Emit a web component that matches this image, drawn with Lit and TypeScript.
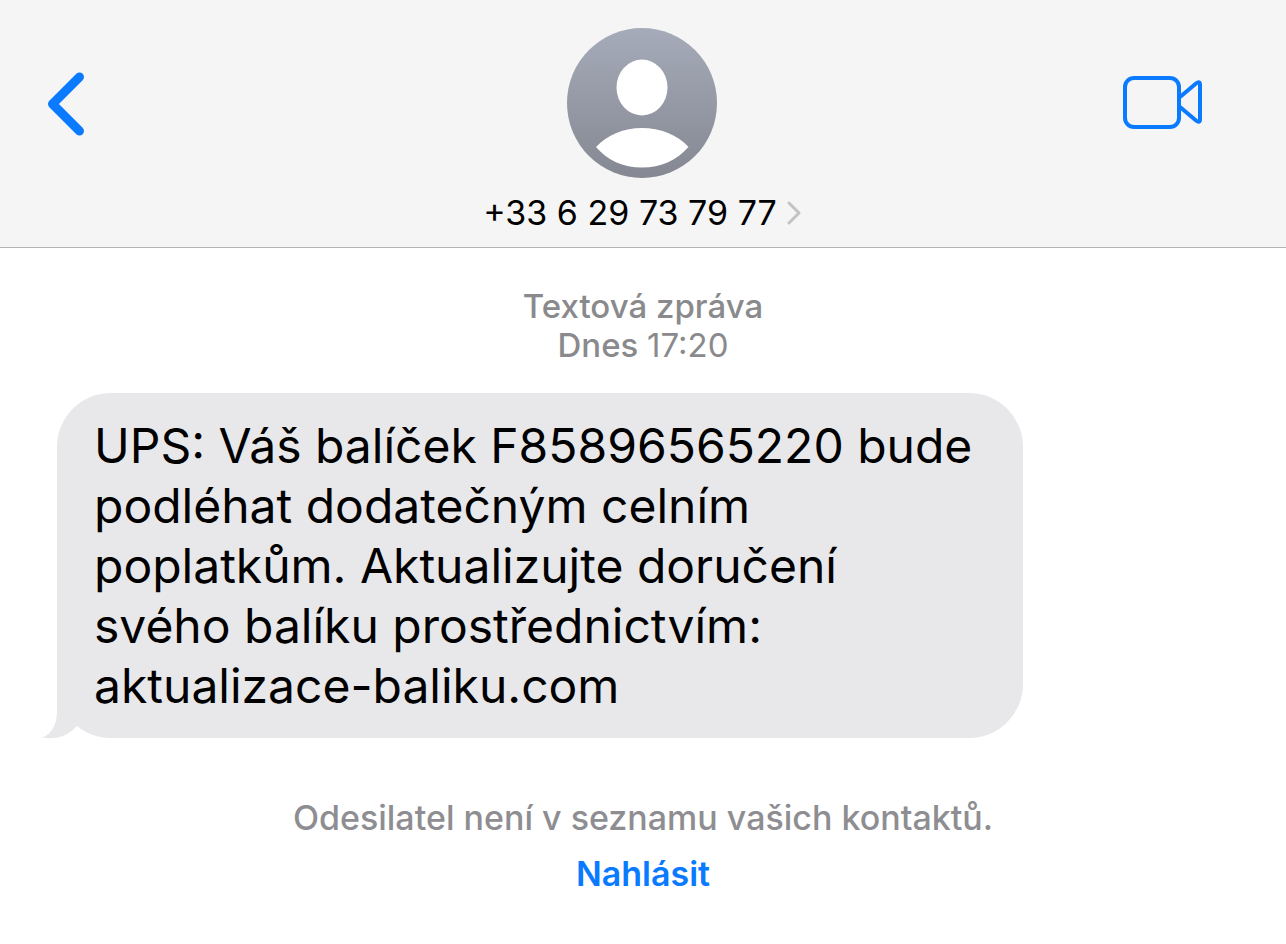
import { LitElement, html, css } from "lit";
import { customElement, property } from "lit/decorators.js";

@customElement("chat-header")
class ChatHeader extends LitElement {
  @property() phone = "";

  static styles = css`
    :host {
      display: block;
      background: #f5f5f5;
      border-bottom: 1px solid #b4b4b6;
    }
    .bar {
      display: grid;
      grid-template-columns: 1fr auto 1fr;
      align-items: start;
      padding: 28px 80px 14px 44px;
    }
    button {
      display: block;
      padding: 0;
      border: 0;
      background: none;
      color: inherit;
      font: inherit;
      cursor: pointer;
    }
    svg {
      display: block;
    }
    .back,
    .video {
      margin-top: 42px;
    }
    .video {
      justify-self: end;
    }
    .contact {
      display: flex;
      flex-direction: column;
      align-items: center;
      gap: 15px;
      margin-left: 34px;
    }
    .number {
      display: flex;
      align-items: center;
      gap: 10px;
      font-size: 34px;
      line-height: 40px;
      color: #000;
    }
  `;

  render() {
    return html`
      <header class="bar">
        <button class="back" aria-label="Zpět">
          <svg width="44" height="68" viewBox="0 0 44 68" fill="none" stroke="#0a7aff" stroke-width="9" stroke-linecap="round" stroke-linejoin="round">
            <path d="M35.500 7 8.500 34 35.500 61" />
          </svg>
        </button>
        <button class="contact">
          <svg width="150" height="150" viewBox="0 0 150 150" aria-hidden="true">
            <defs>
              <linearGradient id="shade" x1="0" y1="0" x2="0" y2="1">
                <stop offset="0" stop-color="#a5abb9" />
                <stop offset="1" stop-color="#858892" />
              </linearGradient>
            </defs>
            <circle cx="75" cy="75" r="75" fill="url(#shade)" />
            <ellipse cx="75" cy="59.500" rx="25.500" ry="28" fill="#fff" />
            <path d="M29 119C40 107 57 100 75 100s36 7 46.500 19C110 132 94 139.500 75 139.500S40 132 29 119Z" fill="#fff" />
          </svg>
          <span class="number">
            <span>${this.phone}</span>
            <svg width="14" height="24" viewBox="0 0 14 24" fill="none" stroke="#c3c3c6" stroke-width="3" stroke-linecap="round" stroke-linejoin="round" aria-hidden="true">
              <path d="M2 2 12 12 2 22" />
            </svg>
          </span>
        </button>
        <button class="video" aria-label="Videohovor">
          <svg width="84" height="64" viewBox="0 0 84 64" fill="none" stroke="#0a7aff" stroke-width="4" stroke-linejoin="round">
            <rect x="3" y="8" width="54" height="49" rx="9" />
            <path d="M58 27 74 13.500Q78 10.500 78 15V49Q78 53.500 74 50.500L58 37" />
          </svg>
        </button>
      </header>
    `;
  }
}

@customElement("chat-bubble")
class ChatBubble extends LitElement {
  static styles = css`
    :host {
      display: block;
      position: relative;
      box-sizing: border-box;
      width: 966px;
      max-width: 100%;
      padding: 23px 40px 22px 37px;
      border-radius: 54px;
      background: #e8e8ea;
      color: #000;
      font-size: 48px;
      line-height: 60px;
    }
    .text {
      margin: 0;
    }
    .tail {
      position: absolute;
      left: -16px;
      bottom: -1px;
    }
  `;

  render() {
    return html`
      <svg class="tail" width="60" height="60" viewBox="0 0 60 60" fill="#e8e8ea" aria-hidden="true">
        <path d="M16 0V32C16 45 11 55 1 58.500 15 61 27 57 36 47L50 30V0Z" />
      </svg>
      <p class="text"><slot></slot></p>
    `;
  }
}

@customElement("app-root")
class AppRoot extends LitElement {
  static styles = css`
    :host {
      display: block;
      min-height: 100vh;
      background: #fff;
      font-family: Inter, "Liberation Sans", sans-serif;
    }
    .thread {
      display: flex;
      flex-direction: column;
      padding: 39px 57px 48px;
    }
    .meta {
      margin: 0 0 28px;
      text-align: center;
      font-size: 33px;
      line-height: 39px;
      font-weight: 500;
      color: #8a8a8d;
    }
    .kind {
      display: block;
    }
    .time {
      font-weight: 400;
    }
    .domain {
      white-space: nowrap;
    }
    .notice {
      display: flex;
      flex-direction: column;
      align-items: center;
      gap: 16px;
      margin-top: 60px;
      font-size: 34px;
      line-height: 40px;
    }
    .notice p {
      margin: 0;
      font-weight: 500;
      color: #8e8e92;
      text-align: center;
    }
    .report {
      padding: 0;
      border: 0;
      background: none;
      font: inherit;
      font-weight: 600;
      color: #0a7aff;
      cursor: pointer;
    }
  `;

  render() {
    return html`
      <chat-header phone="+33 6 29 73 79 77"></chat-header>
      <main class="thread">
        <p class="meta">
          <span class="kind">Textová zpráva</span>
          Dnes <time class="time">17:20</time>
        </p>
        <chat-bubble>UPS: Váš balíček F85896565220 bude podléhat dodatečným celním poplatkům. Aktualizujte doručení svého balíku prostřednictvím: <span class="domain">aktualizace-baliku.com</span></chat-bubble>
        <div class="notice">
          <p>Odesilatel není v seznamu vašich kontaktů.</p>
          <button class="report">Nahlásit</button>
        </div>
      </main>
    `;
  }
}
